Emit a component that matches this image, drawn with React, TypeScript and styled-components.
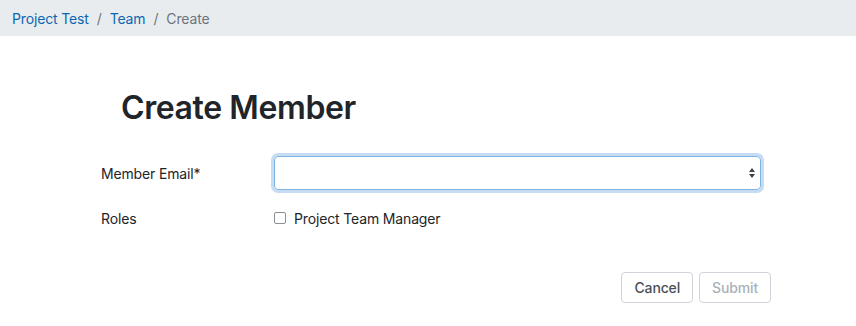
import React from 'react'
import styled, { createGlobalStyle } from 'styled-components'

const GlobalStyle = createGlobalStyle`
  body {
    margin: 0;
    background: #ffffff;
    font-family: Inter, "Liberation Sans", sans-serif;
    color: #212529;
    letter-spacing: -0.15px;
  }
`

const Breadcrumb = styled.nav`
  height: 36px;
  background: #e9ecef;
  display: flex;
  align-items: center;
  padding: 0 12px;
  font-size: 14px;
`

const Crumb = styled.a<{ $active?: boolean }>`
  color: ${(p) => (p.$active ? '#6c757d' : '#0b67b2')};
  text-decoration: none;
`

const Sep = styled.span`
  color: #6c757d;
  padding: 0 8px;
`

const Main = styled.main`
  padding-left: 101px;
  width: 670px;
`

const Heading = styled.h1`
  margin: 53px 0 29px 20px;
  font-size: 32px;
  line-height: 38px;
  font-weight: 600;
  letter-spacing: -0.4px;
`

const Row = styled.div<{ $h: number; $mb: number }>`
  display: flex;
  align-items: center;
  height: ${(p) => p.$h}px;
  margin-bottom: ${(p) => p.$mb}px;
  font-size: 14px;
`

const Label = styled.label`
  width: 173px;
  flex: none;
`

const Select = styled.div`
  width: 481px;
  height: 32px;
  border: 1px solid #7fb3e6;
  border-radius: 4px;
  box-shadow: 0 0 0 3px #c6dcf2;
  display: flex;
  align-items: center;
  justify-content: flex-end;
  padding-right: 4px;
  box-sizing: content-box;
`

const Check = styled.span`
  width: 10px;
  height: 10px;
  border: 1px solid #8a8f94;
  border-radius: 2px;
  margin-right: 8px;
  margin-top: -1px;
`

const Actions = styled.div`
  display: flex;
  justify-content: flex-end;
  gap: 6px;
`

const Button = styled.button<{ $disabled?: boolean }>`
  height: 31px;
  padding: 0 12px;
  border: 1px solid #ced4da;
  border-radius: 4px;
  background: #fff;
  font-family: inherit;
  font-size: 14px;
  font-weight: 500;
  letter-spacing: -0.15px;
  color: ${(p) => (p.$disabled ? '#a9b1b9' : '#495057')};
`

const Arrows = () => (
  <svg width="8" height="12" viewBox="0 0 8 12">
    <path d="M4 1 L7 5 H1 Z" fill="#3d4247" />
    <path d="M4 11 L7 7 H1 Z" fill="#3d4247" />
  </svg>
)

export default function App() {
  return (
    <>
      <GlobalStyle />
      <Breadcrumb>
        <Crumb href="#">Project Test</Crumb>
        <Sep>/</Sep>
        <Crumb href="#">Team</Crumb>
        <Sep>/</Sep>
        <Crumb $active>Create</Crumb>
      </Breadcrumb>
      <Main>
        <Heading>Create Member</Heading>
        <Row $h={34} $mb={18}>
          <Label>Member Email*</Label>
          <Select>
            <Arrows />
          </Select>
        </Row>
        <Row $h={20} $mb={44}>
          <Label>Roles</Label>
          <Check />
          <span>Project Team Manager</span>
        </Row>
        <Actions>
          <Button>Cancel</Button>
          <Button $disabled>Submit</Button>
        </Actions>
      </Main>
    </>
  )
}
